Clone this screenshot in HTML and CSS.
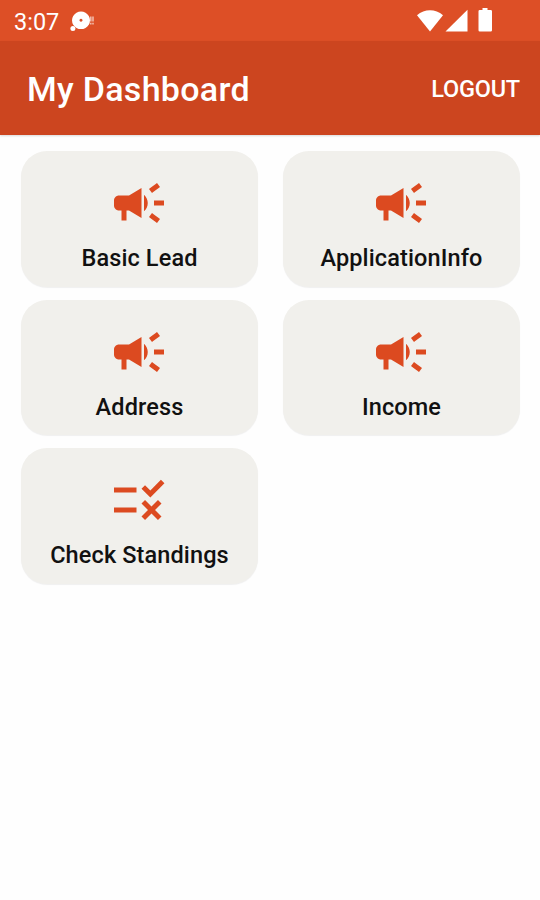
FILE: index.html
```html
<!DOCTYPE html>
<html lang="en">
<head>
  <meta charset="UTF-8" />
  <meta name="viewport" content="width=device-width, initial-scale=1" />
  <title>My Dashboard</title>
  <link rel="stylesheet" href="styles.css">
</head>
<body>
  <!-- Shared icons -->
  <svg class="sprite" width="0" height="0">
    <symbol id="campaign" viewBox="0 0 24 24">
      <path d="M18 11v2h4v-2h-4zm-2 6.61c.96.71 2.21 1.65 3.2 2.39.4-.53.8-1.07 1.2-1.6-.99-.74-2.24-1.68-3.2-2.4-.4.54-.8 1.08-1.2 1.61zM20.4 5.6c-.4-.53-.8-1.07-1.2-1.6-.99.74-2.24 1.68-3.2 2.4.4.53.8 1.07 1.2 1.6.96-.72 2.21-1.65 3.2-2.4zM4 9c-1.1 0-2 .9-2 2v2c0 1.1.9 2 2 2h1v4h2v-4h1l5 3V6L8 9H4zm11.5 3c0-1.33-.58-2.53-1.5-3.35v6.69c.92-.81 1.5-2.01 1.5-3.34z"/>
    </symbol>
    <symbol id="rule" viewBox="0 0 24 24">
      <path d="M16.54 11L13 7.46l1.41-1.41 2.12 2.12 4.24-4.24 1.41 1.41L16.54 11zM11 7H2v2h9V7zm10 6.41L19.59 12 17 14.59 14.41 12 13 13.41 15.59 16 13 18.59 14.41 20 17 17.41 19.59 20 21 18.59 18.41 16 21 13.41zM11 15H2v2h9v-2z"/>
    </symbol>
  </svg>

  <div class="status-bar">
    <span class="time">3:07</span>
    <svg class="notify" width="26" height="22" viewBox="0 0 26 22">
      <path fill-rule="evenodd" d="M12 1.5a9 8.8 0 1 0 .01 0zM12 8.7a1.5 1.5 0 1 1-.01 0z"/>
      <circle cx="3.9" cy="18.4" r="2.5"/>
      <path class="faint" d="M21 6.5h1.6v5H21zM23.2 6.5h1.6v5h-1.6zM21 12.8h1.6v1.8H21zM23.2 12.8h1.6v1.8h-1.6z"/>
    </svg>
    <svg class="signals" width="78" height="26" viewBox="0 0 78 26">
      <path d="M0 7.2C7.5 .5 18.5 .5 26 7.2L13 23.5z"/>
      <path d="M50.5 1.8V23.5H28.5z"/>
      <path d="M65.5 0h5v2h3.2q1.3 0 1.3 1.3v18.9q0 1.3-1.3 1.3H62.8q-1.3 0-1.3-1.3V3.3q0-1.3 1.3-1.3h2.7z"/>
    </svg>
  </div>

  <header class="app-bar">
    <h1>My Dashboard</h1>
    <button type="button" class="logout">LOGOUT</button>
  </header>

  <main class="grid">
    <div class="card">
      <svg class="icon"><use href="#campaign"/></svg>
      <span class="label">Basic Lead</span>
    </div>
    <div class="card">
      <svg class="icon"><use href="#campaign"/></svg>
      <span class="label">ApplicationInfo</span>
    </div>
    <div class="card">
      <svg class="icon"><use href="#campaign"/></svg>
      <span class="label">Address</span>
    </div>
    <div class="card">
      <svg class="icon"><use href="#campaign"/></svg>
      <span class="label">Income</span>
    </div>
    <div class="card">
      <svg class="icon"><use href="#rule"/></svg>
      <span class="label">Check Standings</span>
    </div>
  </main>
</body>
</html>
```

FILE: styles.css
```css
* {
  box-sizing: border-box;
}
body {
  margin: 0;
  min-height: 100vh;
  font-family: Roboto, "Liberation Sans", sans-serif;
  background: #fefefe;
}
.sprite {
  display: block;
}
.status-bar {
  display: flex;
  align-items: center;
  height: 41px;
  padding: 0 45px 0 14px;
  background: #dd4f26;
  color: #fff;
}
.status-bar svg {
  fill: #fff;
}
.time {
  font-size: 23.5px;
  line-height: 28px;
  padding-top: 3px;
}
.notify {
  margin-left: 10px;
}
.notify .faint {
  opacity: 0.6;
}
.signals {
  margin-left: auto;
}
.app-bar {
  display: flex;
  align-items: center;
  justify-content: space-between;
  height: 94px;
  padding: 1px 20px 0 27px;
  background: #cc451f;
  color: #fff;
  box-shadow: 0 1px 2px rgba(0,0,0,0.15);
}
h1 {
  margin: 0;
  font-size: 34px;
  font-weight: 500;
  line-height: 40px;
  letter-spacing: 0.3px;
}
.logout {
  padding: 1px 0 0;
  border: none;
  background: none;
  color: #fff;
  font-family: inherit;
  font-size: 23.5px;
  font-weight: 500;
  line-height: 28px;
  letter-spacing: -0.2px;
  cursor: pointer;
}
.grid {
  display: grid;
  grid-template-columns: 1fr 1fr;
  gap: 13px 25px;
  padding: 16px 20px 0 21px;
}
.card {
  display: flex;
  flex-direction: column;
  align-items: center;
  height: 135.5px;
  padding-top: 22px;
  border-radius: 26px;
  background: #f1f0ec;
  box-shadow: 0 1px 1px rgba(0,0,0,0.06);
}
.icon {
  width: 60px;
  height: 60px;
  margin-right: 1px;
  fill: #dc4a20;
}
.label {
  margin-top: 11px;
  font-size: 23.5px;
  font-weight: 500;
  line-height: 28px;
  letter-spacing: 0.12px;
  color: #111;
}
```
